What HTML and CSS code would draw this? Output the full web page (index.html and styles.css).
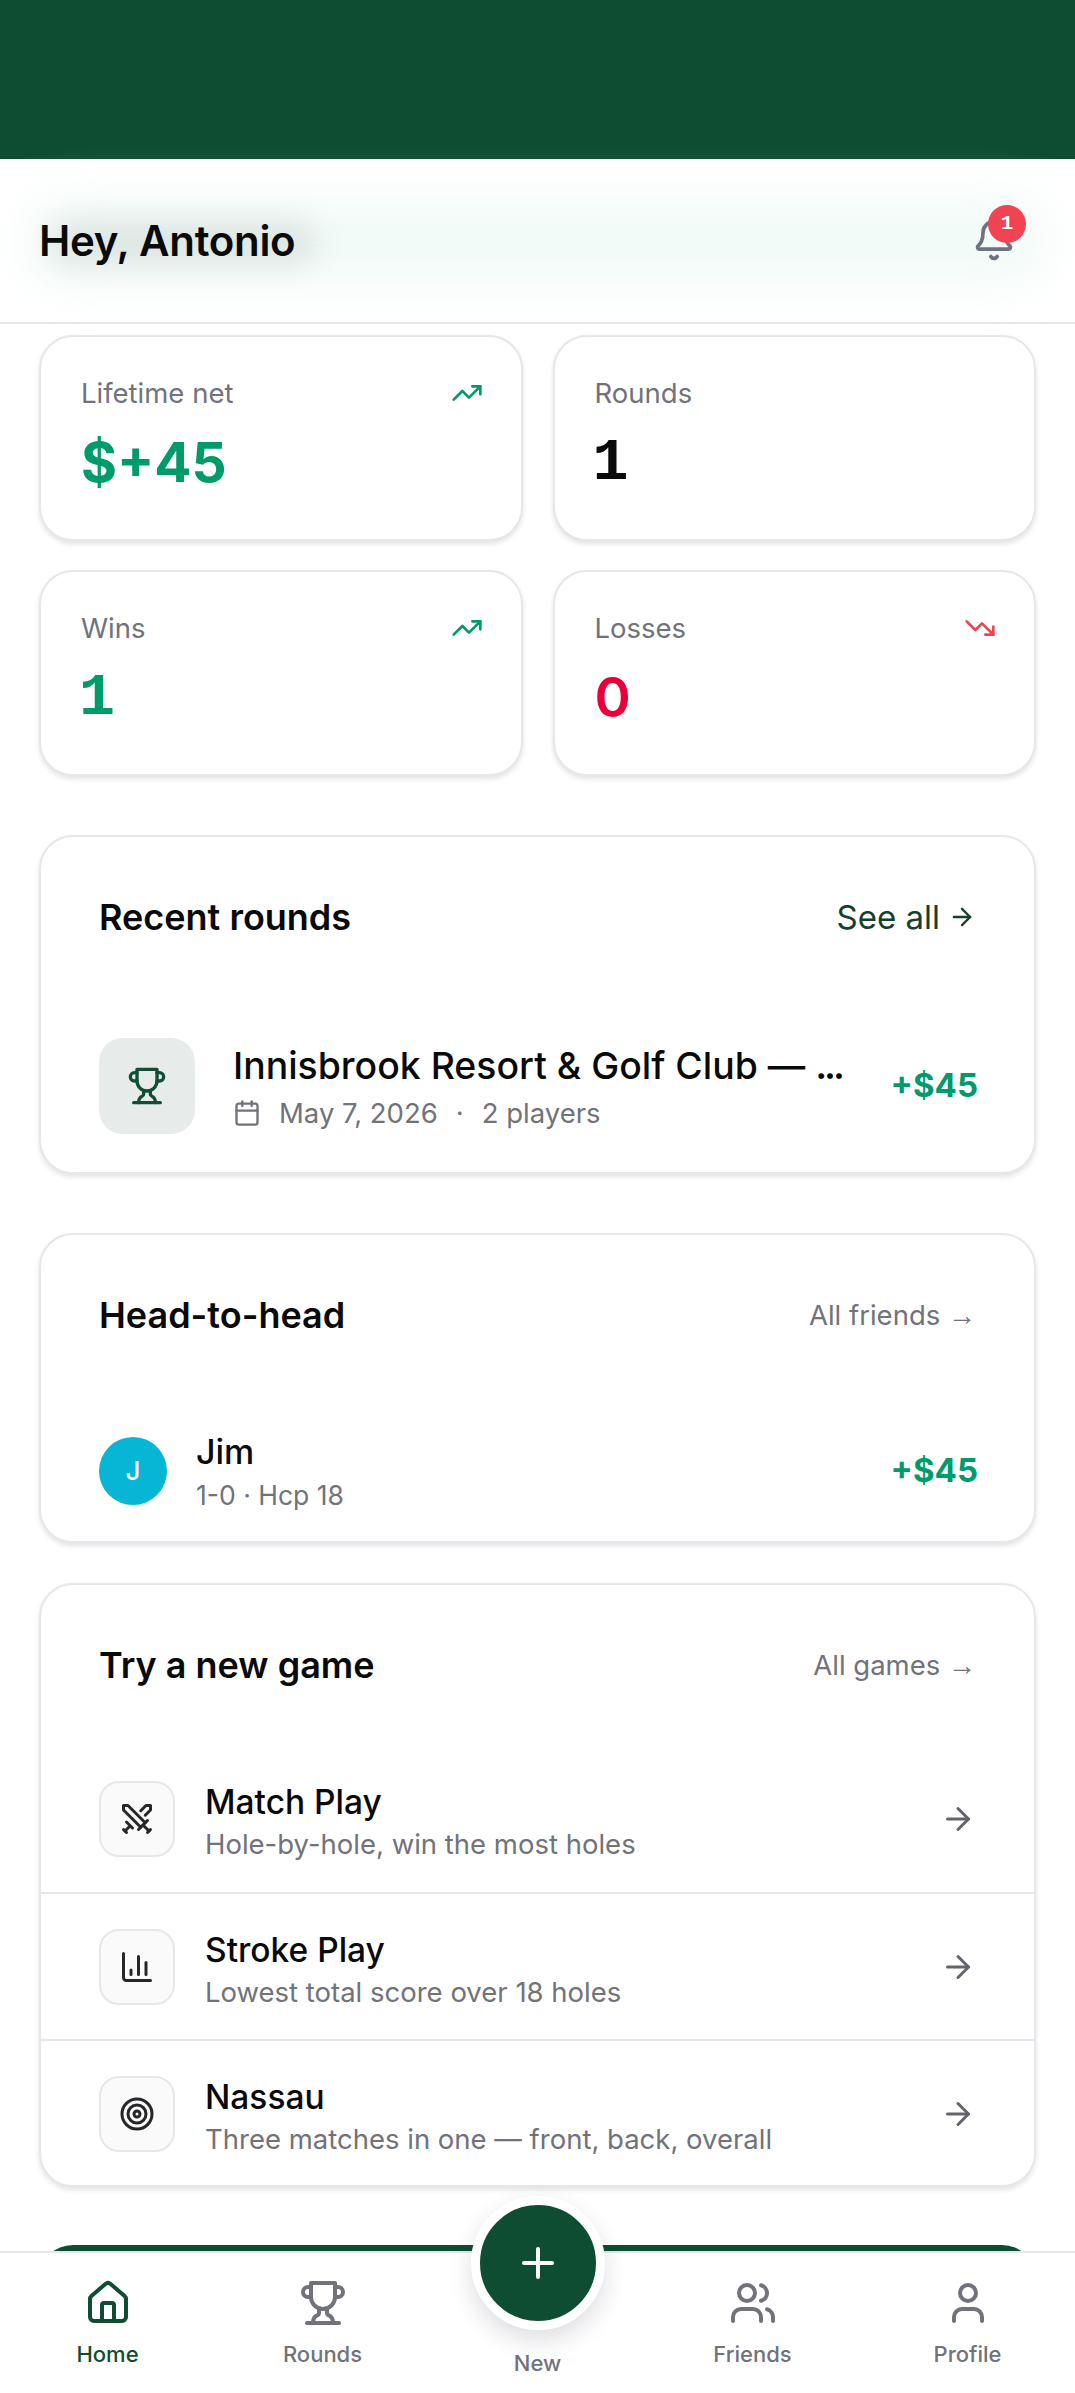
FILE: index.html
```html
<!DOCTYPE html>
<html lang="en">
<head>
<meta charset="utf-8">
<title>Home</title>
<link rel="stylesheet" href="styles.css">
</head>
<body>
<div class="app">
  <div class="topbar"></div>
  <header class="header">
    <div class="glow"></div>
    <h1 class="greeting">Hey, Antonio</h1>
    <div class="bell">
      <svg class="i bell-icon" viewBox="0 0 24 24"><path d="M10.268 21a2 2 0 0 0 3.464 0"/><path d="M3.262 15.326A1 1 0 0 0 4 17h16a1 1 0 0 0 .74-1.673C19.41 13.956 18 12.499 18 8A6 6 0 0 0 6 8c0 4.499-1.411 5.956-2.738 7.326"/></svg>
      <span class="badge">1</span>
    </div>
  </header>
  <main class="main">
    <section class="stats">
      <div class="card stat">
        <div class="stat-top"><span class="stat-label">Lifetime net</span><svg class="i trend up" viewBox="0 0 24 24"><polyline points="22 7 13.5 15.5 8.5 10.5 2 17"/><polyline points="16 7 22 7 22 13"/></svg></div>
        <div class="stat-value up">$+45</div>
      </div>
      <div class="card stat">
        <div class="stat-top"><span class="stat-label">Rounds</span></div>
        <div class="stat-value one">1</div>
      </div>
      <div class="card stat">
        <div class="stat-top"><span class="stat-label">Wins</span><svg class="i trend up" viewBox="0 0 24 24"><polyline points="22 7 13.5 15.5 8.5 10.5 2 17"/><polyline points="16 7 22 7 22 13"/></svg></div>
        <div class="stat-value up one">1</div>
      </div>
      <div class="card stat">
        <div class="stat-top"><span class="stat-label">Losses</span><svg class="i trend down" viewBox="0 0 24 24"><polyline points="22 17 13.5 8.5 8.5 13.5 2 7"/><polyline points="16 17 22 17 22 11"/></svg></div>
        <div class="stat-value neg">0</div>
      </div>
    </section>

    <section class="card panel recent">
      <div class="panel-head">
        <h2 class="panel-title">Recent rounds</h2>
        <span class="see-all">See all <svg class="i see-arrow" viewBox="0 0 24 24"><path d="M5 12h14"/><path d="m12 5 7 7-7 7"/></svg></span>
      </div>
      <div class="round">
        <div class="round-icon"><svg class="i" viewBox="0 0 24 24"><path d="M6 9H4.5a2.5 2.5 0 0 1 0-5H6"/><path d="M18 9h1.5a2.5 2.5 0 0 0 0-5H18"/><path d="M4 22h16"/><path d="M10 14.66V17c0 .55-.47.98-.97 1.21C7.85 18.75 7 20.24 7 22"/><path d="M14 14.66V17c0 .55.47.98.97 1.21C16.15 18.75 17 20.24 17 22"/><path d="M18 2H6v7a6 6 0 0 0 12 0V2Z"/></svg></div>
        <div class="round-body">
          <div class="round-title">Innisbrook Resort &amp; Golf Club — <span class="dots">...</span></div>
          <div class="round-meta"><svg class="i cal" viewBox="0 0 24 24"><path d="M8 2v4"/><path d="M16 2v4"/><rect x="3" y="4" width="18" height="18" rx="2"/><path d="M3 10h18"/></svg><span>May 7, 2026</span><span>·</span><span>2 players</span></div>
        </div>
        <div class="amount">+$45</div>
      </div>
    </section>

    <section class="card panel h2h">
      <div class="panel-head">
        <h2 class="panel-title">Head-to-head</h2>
        <span class="link-muted">All friends <span class="thin-arrow">→</span></span>
      </div>
      <div class="friend">
        <div class="avatar">J</div>
        <div class="friend-body">
          <div class="friend-name">Jim</div>
          <div class="friend-sub">1-0 · Hcp 18</div>
        </div>
        <div class="amount">+$45</div>
      </div>
    </section>

    <section class="card panel games">
      <div class="panel-head">
        <h2 class="panel-title">Try a new game</h2>
        <span class="link-muted">All games <span class="thin-arrow">→</span></span>
      </div>
      <div class="game">
        <div class="game-icon"><svg class="i" viewBox="0 0 24 24"><polyline points="14.5 17.5 3 6 3 3 6 3 17.5 14.5"/><line x1="13" y1="19" x2="19" y2="13"/><line x1="16" y1="16" x2="20" y2="20"/><line x1="19" y1="21" x2="21" y2="19"/><polyline points="14.5 6.5 18 3 21 3 21 6 17.5 9.5"/><line x1="5" y1="14" x2="9" y2="18"/><line x1="7" y1="17" x2="4" y2="20"/><line x1="3" y1="19" x2="5" y2="21"/></svg></div>
        <div class="game-body"><div class="game-name">Match Play</div><div class="game-sub">Hole-by-hole, win the most holes</div></div>
        <svg class="i game-arrow" viewBox="0 0 24 24"><path d="M5 12h14"/><path d="m12 5 7 7-7 7"/></svg>
      </div>
      <div class="game">
        <div class="game-icon"><svg class="i" viewBox="0 0 24 24"><path d="M3 3v16a2 2 0 0 0 2 2h16"/><path d="M18 17V9"/><path d="M13 17V5"/><path d="M8 17v-3"/></svg></div>
        <div class="game-body"><div class="game-name">Stroke Play</div><div class="game-sub">Lowest total score over 18 holes</div></div>
        <svg class="i game-arrow" viewBox="0 0 24 24"><path d="M5 12h14"/><path d="m12 5 7 7-7 7"/></svg>
      </div>
      <div class="game">
        <div class="game-icon"><svg class="i" viewBox="0 0 24 24"><circle cx="12" cy="12" r="10"/><circle cx="12" cy="12" r="6"/><circle cx="12" cy="12" r="2"/></svg></div>
        <div class="game-body"><div class="game-name">Nassau</div><div class="game-sub">Three matches in one — front, back, overall</div></div>
        <svg class="i game-arrow" viewBox="0 0 24 24"><path d="M5 12h14"/><path d="m12 5 7 7-7 7"/></svg>
      </div>
    </section>

    <div class="cta"></div>
  </main>

  <nav class="nav">
    <div class="tab active">
      <svg class="i" viewBox="0 0 24 24"><path d="M15 21v-8a1 1 0 0 0-1-1h-4a1 1 0 0 0-1 1v8"/><path d="M3 10a2 2 0 0 1 .709-1.528l7-5.999a2 2 0 0 1 2.582 0l7 5.999A2 2 0 0 1 21 10v9a2 2 0 0 1-2 2H5a2 2 0 0 1-2-2z"/></svg>
      <span>Home</span>
    </div>
    <div class="tab">
      <svg class="i" viewBox="0 0 24 24"><path d="M6 9H4.5a2.5 2.5 0 0 1 0-5H6"/><path d="M18 9h1.5a2.5 2.5 0 0 0 0-5H18"/><path d="M4 22h16"/><path d="M10 14.66V17c0 .55-.47.98-.97 1.21C7.85 18.75 7 20.24 7 22"/><path d="M14 14.66V17c0 .55.47.98.97 1.21C16.15 18.75 17 20.24 17 22"/><path d="M18 2H6v7a6 6 0 0 0 12 0V2Z"/></svg>
      <span>Rounds</span>
    </div>
    <div class="tab tab-new">
      <div class="fab"><svg class="i" viewBox="0 0 24 24"><path d="M5 12h14"/><path d="M12 5v14"/></svg></div>
      <span>New</span>
    </div>
    <div class="tab">
      <svg class="i" viewBox="0 0 24 24"><path d="M16 21v-2a4 4 0 0 0-4-4H6a4 4 0 0 0-4 4v2"/><circle cx="9" cy="7" r="4"/><path d="M22 21v-2a4 4 0 0 0-3-3.87"/><path d="M16 3.13a4 4 0 0 1 0 7.75"/></svg>
      <span>Friends</span>
    </div>
    <div class="tab">
      <svg class="i" viewBox="0 0 24 24"><path d="M19 21v-2a4 4 0 0 0-4-4H9a4 4 0 0 0-4 4v2"/><circle cx="12" cy="7" r="4"/></svg>
      <span>Profile</span>
    </div>
  </nav>
</div>
</body>
</html>
```
FILE: styles.css
```css
* { box-sizing: border-box; }
html, body { margin: 0; padding: 0; background: #fff; }
body { font-family: Inter, "Noto Sans", sans-serif; color: #0a0a0a; }
h1, h2 { margin: 0; }

.i { fill: none; stroke: currentColor; stroke-width: 2; stroke-linecap: round; stroke-linejoin: round; display: block; flex: none; }

.app { position: relative; width: 1075px; height: 2393px; overflow: hidden; display: flex; flex-direction: column; background: #fff; }
.topbar { height: 159px; background: #0f4d33; flex: none; }

.header { position: relative; flex: none; height: 165px; padding: 0 39px; display: flex; align-items: center; justify-content: space-between; border-bottom: 2px solid #e5e7eb; background: #fff; }
.glow { position: absolute; left: 30px; right: 30px; top: 42px; height: 80px; background: #f1faf7; filter: blur(24px); border-radius: 30px; }
.greeting { position: relative; isolation: isolate; font-size: 42px; font-weight: 600; letter-spacing: -0.3px; line-height: 1; }
.greeting::before { content: ""; position: absolute; z-index: -1; left: 8px; right: -22px; top: -2px; bottom: -6px; border-radius: 30px; background: rgba(0,0,0,.075); filter: blur(14px); }
.bell { position: relative; width: 44px; height: 44px; margin-right: 20px; color: #6f7280; margin-top: -2px; }
.bell-icon { width: 44px; height: 44px; }
.badge { position: absolute; left: 16px; top: -13px; width: 38px; height: 38px; border-radius: 50%; background: #f04452; color: #fff; font-family: "Liberation Mono", monospace; font-size: 21px; font-weight: 700; display: flex; align-items: center; justify-content: center; }

.main { flex: 1; min-height: 0; overflow: hidden; padding: 11px 39px 0; }
.card { background: #fff; border: 2px solid #e5e7eb; border-radius: 34px; box-shadow: 0 3px 5px rgba(17,24,39,.12); }

.stats { display: grid; grid-template-columns: 1fr 1fr; gap: 29px 30px; }
.stat { height: 206px; padding: 40px 38px 0 40px; }
.stat-top { display: flex; justify-content: space-between; align-items: center; height: 32px; }
.stat-label { font-size: 27.5px; color: #71727a; }
.trend { width: 32px; height: 32px; }
.trend.up { color: #009b6a; }
.trend.down { color: #ef4352; }
.stat-value { margin-top: 21px; font-size: 55px; font-weight: 700; line-height: 64px; }
.stat-value.up { color: #009b6a; }
.stat-value.neg { color: #ea0039; font-weight: 600; }
.stat-value.one { font-family: "Liberation Mono", monospace; font-weight: 700; font-size: 60px; margin-top: 22px; margin-left: -2px; }

.panel { padding: 0; }
.panel-head { display: flex; justify-content: space-between; align-items: center; padding: 0 58px; }
.panel-title { font-size: 36px; font-weight: 600; letter-spacing: 0; }
.recent { margin-top: 59px; height: 339px; }
.recent .panel-head { height: 160px; }
.see-all { display: flex; align-items: center; gap: 8px; font-size: 33px; color: #15402d; }
.see-arrow { width: 28px; height: 28px; }
.link-muted { font-size: 27.5px; color: #71727a; }
.thin-arrow { font-family: "Liberation Sans", sans-serif; font-size: 28px; }

.round { display: flex; align-items: center; padding: 41px 58px 0 58px; }
.round-icon { width: 96px; height: 96px; border-radius: 24px; background: #e7ebea; color: #114f35; display: flex; align-items: center; justify-content: center; flex: none; }
.round-icon .i { width: 40px; height: 40px; }
.round-body { flex: 1; min-width: 0; margin-left: 38px; }
.round-title { font-size: 37.4px; font-weight: 450; white-space: nowrap; width: 605px; }
.dots { letter-spacing: -3px; font-weight: 600; }
.round-meta { display: flex; align-items: center; gap: 18px; margin-top: 8px; font-size: 27.5px; color: #71727a; }
.cal { width: 28px; height: 28px; }
.amount { font-size: 33px; font-weight: 700; color: #009b6a; flex: none; margin-right: -2px; margin-top: -2px; }

.h2h { margin-top: 59px; height: 310px; }
.h2h .panel-head { height: 160px; }
.friend { display: flex; align-items: center; padding: 35px 58px 0; }
.avatar { width: 68px; height: 68px; border-radius: 50%; background: #06b6d4; color: #fff; font-size: 26px; font-weight: 500; display: flex; align-items: center; justify-content: center; flex: none; }
.friend-body { flex: 1; margin-left: 29px; padding-top: 1px; }
.friend-name { font-size: 34px; font-weight: 450; }
.friend-sub { font-size: 26.5px; color: #71727a; margin-top: 7px; }

.games { margin-top: 40px; height: 604px; }
.games .panel-head { height: 160px; }
.game { display: flex; align-items: center; height: 147px; padding: 0 58px; border-top: 2px solid #e5e7eb; }
.panel-head + .game { border-top: 0; }
.game-icon { width: 76px; height: 76px; border-radius: 20px; border: 2px solid #e5e7eb; background: #fafafa; color: #27272a; display: flex; align-items: center; justify-content: center; flex: none; }
.game-icon .i { width: 36px; height: 36px; }
.game-body { flex: 1; margin-left: 30px; padding-top: 6px; }
.game-name { font-size: 33.5px; font-weight: 450; }
.game-sub { font-size: 27.5px; color: #71727a; margin-top: 5px; }
.game-arrow { width: 36px; height: 36px; color: #63646c; }

.cta { margin-top: 58px; height: 100px; background: #0f4d33; border-radius: 34px; }

.nav { position: absolute; left: 0; right: 0; bottom: 0; height: 142px; display: grid; grid-template-columns: repeat(5, 1fr); background: #fff; border-top: 2px solid #e5e7eb; }
.tab { display: flex; flex-direction: column; align-items: center; padding-top: 26px; gap: 14px; font-size: 22px; font-weight: 500; color: #71727a; }
.tab .i { width: 48px; height: 48px; }
.tab.active { color: #0f4d33; }
.tab-new { position: relative; padding-top: 97px; }
.fab { position: absolute; left: 50%; top: -57px; transform: translateX(-50%); width: 134px; height: 134px; border-radius: 50%; background: #0f4d33; border: 9px solid #fff; color: #fff; display: flex; align-items: center; justify-content: center; box-shadow: 0 10px 24px rgba(17,24,39,.14); }
```
